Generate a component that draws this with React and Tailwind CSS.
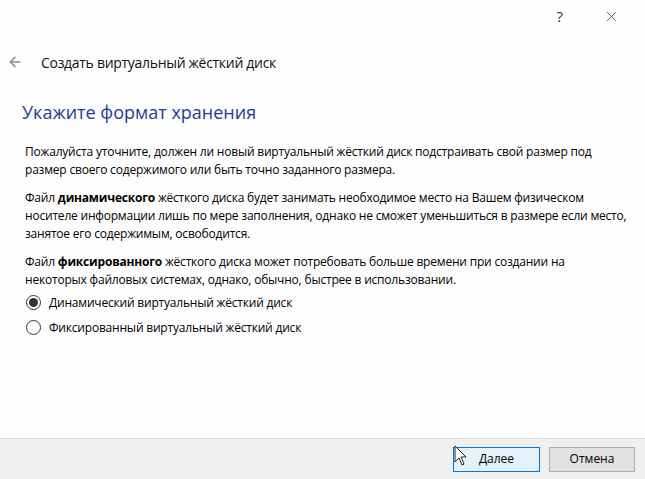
import { ArrowLeft, X } from "lucide-react";

const font = { fontFamily: '"Open Sans", "Noto Sans", sans-serif' };

const Radio = ({ checked, label }) => (
  <label className="flex items-center gap-[8px] h-[25px]">
    <span className="w-[15px] h-[15px] rounded-full border border-[#333] bg-white flex items-center justify-center">
      {checked && <span className="w-[9px] h-[9px] rounded-full bg-[#333]"></span>}
    </span>
    <span className="text-[12px] tracking-[-0.2px] text-[#000]">{label}</span>
  </label>
);

const Cursor = () => (
  <svg className="absolute left-[454px] top-[445px]" width="14" height="22" viewBox="0 0 14 22">
    <path d="M1 1 L1 17 L5 13 L8 20 L10 19 L7 12 L12 12 Z" fill="#fff" stroke="#222" strokeWidth="1" />
  </svg>
);

export default function App() {
  return (
    <div className="relative w-[645px] h-[479px] bg-[#fefefe] flex flex-col overflow-hidden" style={font}>
      {/* title bar */}
      <div className="h-[32px] flex items-center justify-end pr-[25px] gap-[40px] text-[#333]">
        <span className="text-[15px] leading-none">?</span>
        <X size={17} strokeWidth={1} />
      </div>

      {/* subtitle */}
      <div className="mt-[18px] h-[24px] flex items-center pl-[7px]">
        <ArrowLeft size={16} strokeWidth={2.25} className="text-[#888]" />
        <span className="ml-[18px] text-[14px] tracking-[-0.3px] text-[#111]">Создать виртуальный жёсткий диск</span>
      </div>

      {/* heading */}
      <h1 className="mt-[24px] pl-[22px] text-[18px] leading-[28px] text-[#1c3c9a]">
        Укажите формат хранения
      </h1>

      {/* body */}
      <div className="mt-[17px] pl-[25px] text-[12px] tracking-[-0.2px] leading-[18px] text-[#000] flex flex-col gap-[10px]">
        <p>
          Пожалуйста уточните, должен ли новый виртуальный жёсткий диск подстраивать свой размер под
          <br />
          размер своего содержимого или быть точно заданного размера.
        </p>
        <p>
          Файл <b>динамического</b> жёсткого диска будет занимать необходимое место на Вашем физическом
          <br />
          носителе информации лишь по мере заполнения, однако не сможет уменьшиться в размере если место,
          <br />
          занятое его содержимым, освободится.
        </p>
        <p>
          Файл <b>фиксированного</b> жёсткого диска может потребовать больше времени при создании на
          <br />
          некоторых файловых системах, однако, обычно, быстрее в использовании.
        </p>
      </div>

      {/* options */}
      <div className="mt-[1px] pl-[26px] flex flex-col">
        <Radio checked label="Динамический виртуальный жёсткий диск" />
        <Radio label="Фиксированный виртуальный жёсткий диск" />
      </div>

      <div className="flex-1"></div>

      {/* footer */}
      <div className="h-[41px] bg-[#efefef] border-t border-[#dcdcdc] flex items-center justify-end gap-[9px] pr-[10px]">
        <button className="w-[87px] h-[25px] bg-[#e5f1fb] border border-[#0078d7] text-[12px] text-[#000]">
          Далее
        </button>
        <button className="w-[86px] h-[25px] bg-[#e1e1e1] border border-[#adadad] text-[12px] text-[#000]">
          Отмена
        </button>
      </div>

      <Cursor />
    </div>
  );
}
